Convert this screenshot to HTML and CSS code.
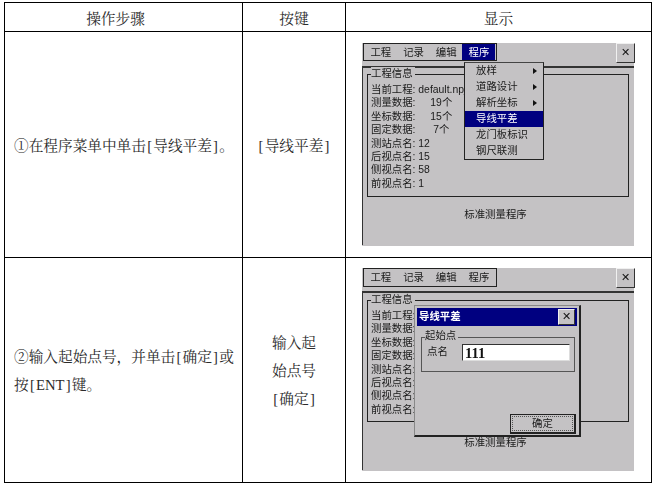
FILE: index.html
```html
<!DOCTYPE html>
<html lang="zh-CN">
<head>
<meta charset="utf-8">
<title>导线平差</title>
<link rel="stylesheet" href="styles.css">
</head>
<body>
<table class="doc">
  <colgroup><col class="c1"><col class="c2"><col class="c3"></colgroup>
  <tr class="head"><th class="h1">操作步骤</th><th>按键</th><th>显示</th></tr>
  <tr class="row1">
    <td class="step">①在程序菜单中单击<span class="bk">[</span>导线平差<span class="bk">]</span>。</td>
    <td class="key"><span class="bk">[</span>导线平差<span class="bk">]</span></td>
    <td class="shot">
      <div class="screen s1">
        <div class="top">
          <div class="menubar"><span>工程</span><span>记录</span><span>编辑</span><span class="on">程序</span></div>
          <div class="xbtn">✕</div>
        </div>
        <div class="panel">
          <div class="group">
            <div class="legend">工程信息</div>
            <div class="line">当前工程: default.npj</div>
            <div class="line">测量数据: <i class="n1">19个</i></div>
            <div class="line">坐标数据: <i class="n1">15个</i></div>
            <div class="line">固定数据: <i class="n2">7个</i></div>
            <div class="line">测站点名: 12</div>
            <div class="line">后视点名: 15</div>
            <div class="line">侧视点名: 58</div>
            <div class="line">前视点名: 1</div>
          </div>
          <div class="foot">标准测量程序</div>
        </div>
        <div class="menu">
          <div class="mi">放样<b class="arr"></b></div>
          <div class="mi">道路设计<b class="arr"></b></div>
          <div class="mi">解析坐标<b class="arr"></b></div>
          <div class="mi sel">导线平差</div>
          <div class="mi">龙门板标识</div>
          <div class="mi">钢尺联测</div>
        </div>
      </div>
    </td>
  </tr>
  <tr class="row2">
    <td class="step">②输入起始点号，并单击<span class="bk">[</span>确定<span class="bk">]</span>或<br>按<span class="bk">[</span>ENT<span class="bk">]</span>键。</td>
    <td class="key">输入起<br>始点号<br><span class="bk">[</span>确定<span class="bk">]</span></td>
    <td class="shot">
      <div class="screen s2">
        <div class="top">
          <div class="menubar"><span>工程</span><span>记录</span><span>编辑</span><span>程序</span></div>
          <div class="xbtn">✕</div>
        </div>
        <div class="panel">
          <div class="group">
            <div class="legend">工程信息</div>
            <div class="line">当前工程:</div>
            <div class="line">测量数据:</div>
            <div class="line">坐标数据:</div>
            <div class="line">固定数据:</div>
            <div class="line">测站点名:</div>
            <div class="line">后视点名:</div>
            <div class="line">侧视点名:</div>
            <div class="line">前视点名:</div>
          </div>
          <div class="foot">标准测量程序</div>
        </div>
        <div class="dialog">
          <div class="title"><span>导线平差</span><div class="xbtn small">✕</div></div>
          <div class="dbody">
            <div class="dgroup">
              <div class="dlegend">起始点</div>
              <div class="field"><label>点名</label><div class="input">111</div></div>
            </div>
            <div class="actions"><div class="ok"><span>确定</span></div></div>
          </div>
        </div>
      </div>
    </td>
  </tr>
</table>
</body>
</html>
```
FILE: styles.css
```css
html, body { margin: 0; padding: 0; background: #fff; }
body { font-family: "Liberation Serif", "Noto Serif CJK SC", "Noto Sans CJK SC", serif; color: #2a2a2a; }
.doc { border-collapse: collapse; table-layout: fixed; width: 647px; margin: 2px 0 0 4px; font-size: 14.67px; }
.c1 { width: 238px; } .c2 { width: 103px; } .c3 { width: 306px; }
.doc th, .doc td { border: 1px solid #000; padding: 0; }
.doc th { font-weight: 400; text-align: center; }
.doc th.h1 { padding-right: 16px; }
.head { height: 29px; }
.row1 { height: 226px; }
.row2 { height: 225px; }
.bk { display: inline-block; width: 0.5em; text-align: center; }
.step { padding: 2px 0 0 9px !important; line-height: 28px; white-space: nowrap; }
.key { text-align: center; line-height: 28px; padding-top: 2px !important; }
.shot { vertical-align: top; padding: 11px 0 0 16px !important; }
.row2 .shot { padding-top: 10px !important; }

.screen { position: relative; width: 272px; height: 203px; background: #c4c2c4; font-family: "Liberation Sans", "Noto Sans CJK SC", sans-serif; font-size: 10.4px; color: #1a1a1a; filter: blur(0.35px); }
.top { display: flex; justify-content: space-between; align-items: flex-start; height: 23px; }
.menubar { display: flex; width: 134px; height: 18px; margin-left: 1px; border: 1px solid #222; box-sizing: border-box; }
.s2 .menubar { height: 19px; }
.menubar span { width: 32.7px; text-align: center; line-height: 18px; height: 16px; padding-left: 1px; box-sizing: border-box; }
.menubar .on { background: #000080; color: #fff; }
.xbtn { width: 19px; height: 20px; box-sizing: border-box; border: 1px solid #f0f0f0; border-right: 1px solid #333; border-bottom: 1px solid #333; text-align: center; line-height: 18px; font-size: 11px; font-family: "DejaVu Sans", sans-serif; color: #111; margin-right: -1px; }
.panel { border-top: 2px solid #333; border-left: 1px solid #333; height: 179px; box-sizing: border-box; padding: 6px 4px 0 4px; }
.s2 .panel { padding-top: 7px; }
.group { position: relative; border: 1px solid #222; height: 123px; width: 262px; box-sizing: border-box; padding: 8px 0 0 3px; }
.s2 .group { height: 122px; }
.legend { position: absolute; top: -8px; left: 3px; background: #c4c2c4; padding: 0 2px 0 0; line-height: 13px; }
.line { line-height: 13.4px; white-space: nowrap; height: 13.4px; }
.line i { font-style: normal; }
.n1 { margin-left: 12px; } .n2 { margin-left: 15px; }
.foot { text-align: center; margin: 11px 0 0 -6px; line-height: 14px; }
.s2 .foot { margin-top: 14px; }

.menu { position: absolute; left: 102px; top: 19px; width: 80px; height: 98px; box-sizing: border-box; background: #c4c2c4; border: 1px solid #222; border-top-color: #444; }
.mi { position: relative; height: 16px; line-height: 15px; padding-left: 11px; }
.sel { background: #000080; color: #fff; line-height: 16px; }
.arr { position: absolute; right: 6px; top: 5px; width: 0; height: 0; border-left: 4px solid #111; border-top: 3px solid transparent; border-bottom: 3px solid transparent; }

.dialog { position: absolute; left: 52px; top: 37px; width: 167px; height: 132px; box-sizing: border-box; background: #c4c2c4; border: 1px solid #888; border-right: 2px solid #222; border-bottom: 2px solid #222; padding: 2px 2px 0 2px; display: flex; flex-direction: column; }
.title { display: flex; justify-content: space-between; align-items: center; height: 18px; background: #000080; color: #fff; padding: 0 2px 0 2px; line-height: 18px; flex: none; font-weight: 700; }
.xbtn.small { width: 17px; height: 16px; line-height: 14px; background: #c4c2c4; margin: 0; font-weight: 400; }
.dbody { flex: 1; padding: 11px 1px 0 4px; display: flex; flex-direction: column; }
.dgroup { position: relative; height: 35px; border: 1px solid #555; box-sizing: border-box; width: 154px; }
.dlegend { position: absolute; top: -9px; left: 3px; background: #c4c2c4; padding: 0 2px 0 0; line-height: 13px; }
.field { display: flex; padding: 6px 0 0 5px; }
.field label { width: 35px; line-height: 15px; }
.input { width: 108px; height: 17px; box-sizing: border-box; background: #fff; border-top: 1px solid #333; border-left: 1px solid #333; border-right: 1px solid #ddd; border-bottom: 1px solid #ddd; font-family: "Liberation Serif", serif; font-weight: 700; font-size: 14.5px; line-height: 16px; padding-left: 2px; color: #111; }
.actions { margin-top: auto; display: flex; justify-content: flex-end; margin-bottom: 1px; }
.ok { width: 66px; height: 20px; box-sizing: border-box; border: 1px solid #222; border-right: 2px solid #222; border-bottom: 2px solid #222; padding: 1px; }
.ok span { display: block; height: 100%; border: 1px dotted #555; box-sizing: border-box; text-align: center; line-height: 14px; }
```
